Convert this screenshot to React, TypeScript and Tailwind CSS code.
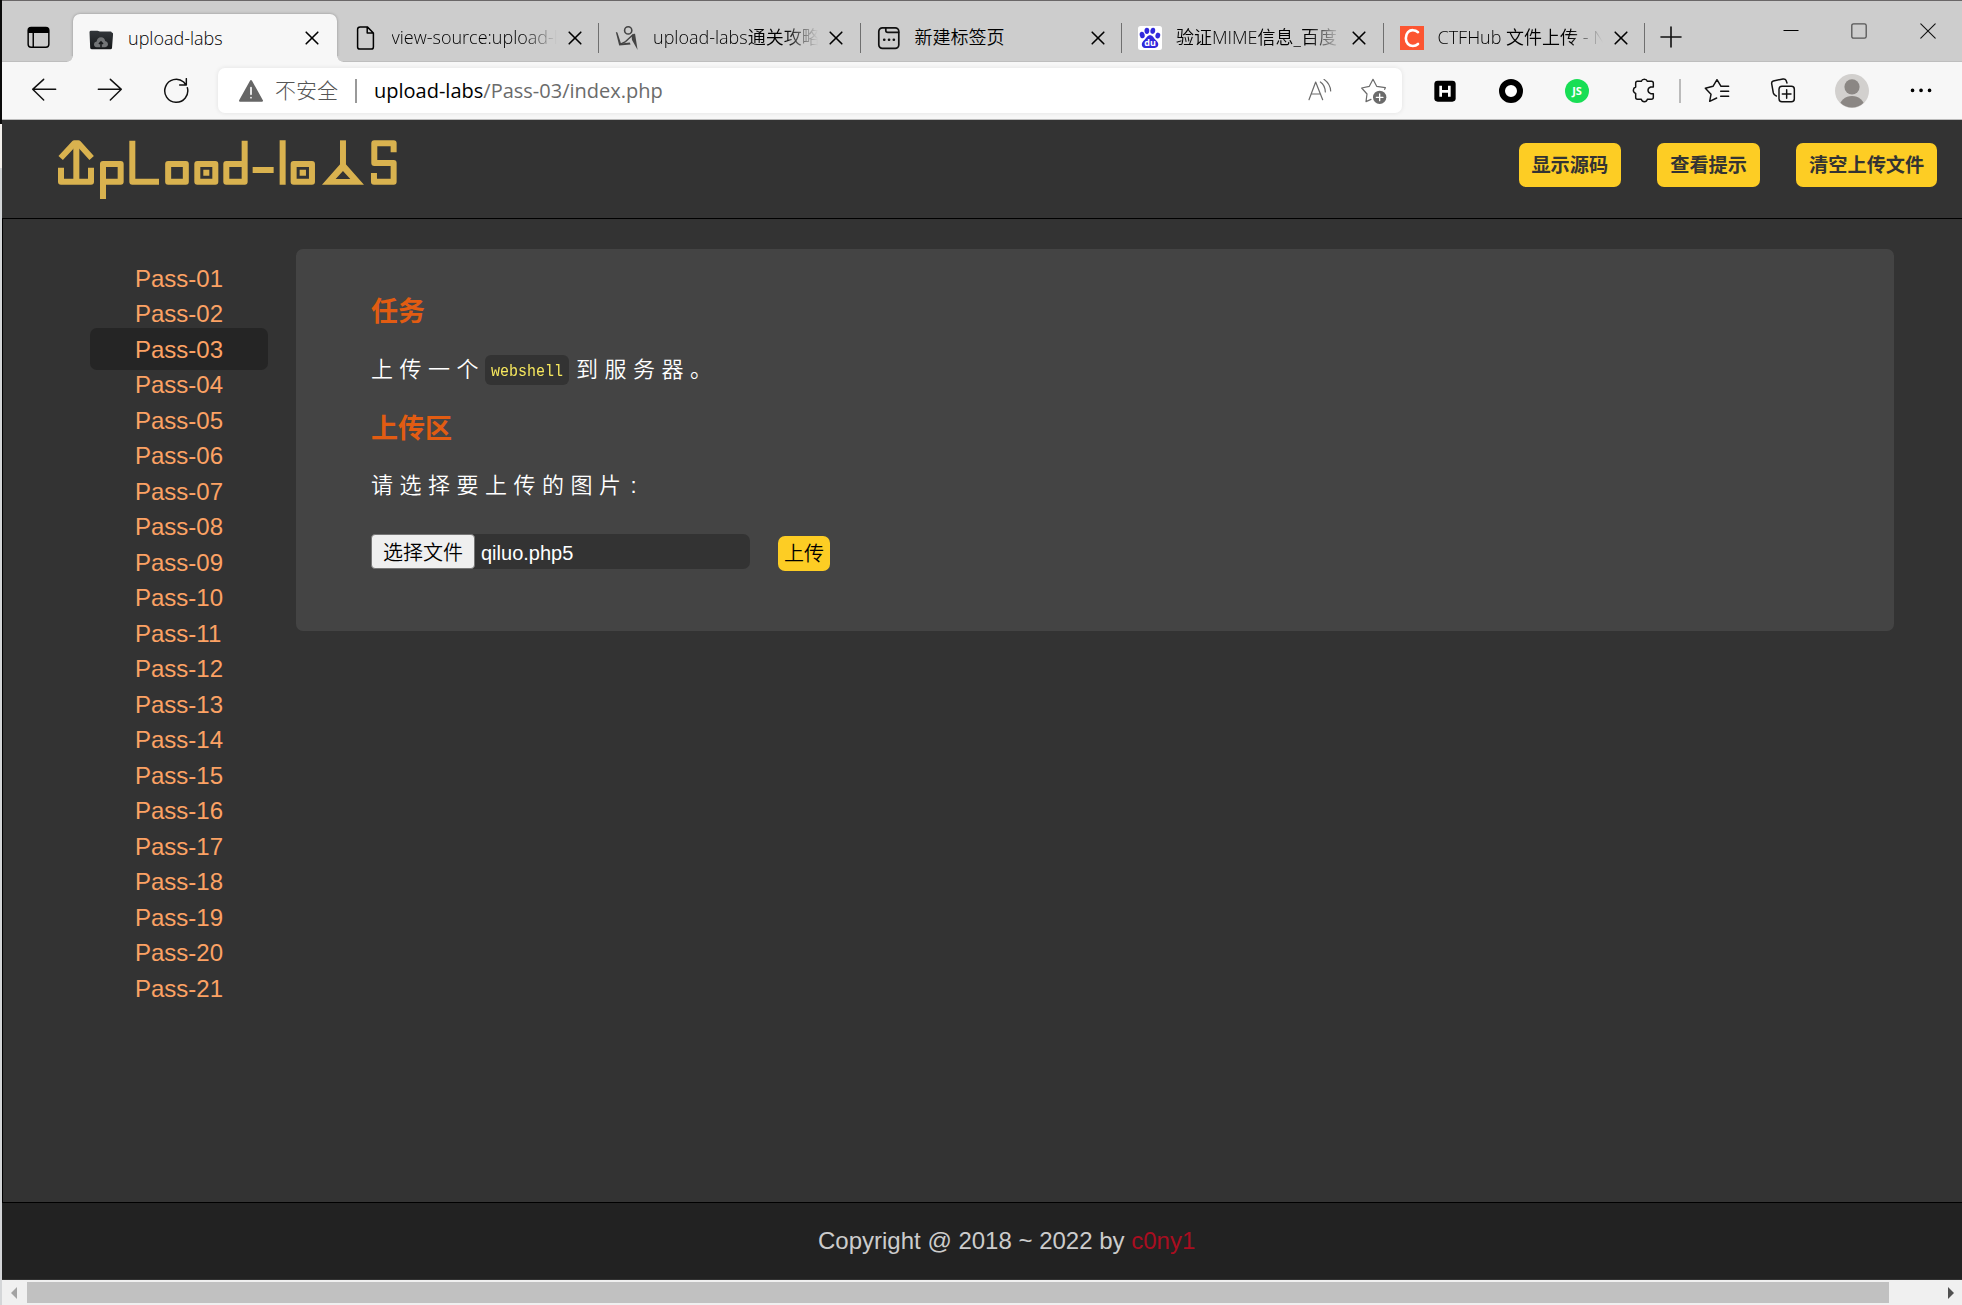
import type { ReactNode } from 'react';

function Drawing({ box, className, children }: { box: string; className: string; children: ReactNode }) {
  return (
    <svg viewBox={box} className={`block shrink-0 ${className}`} fill="none" stroke="#111" strokeWidth="4.4" strokeLinecap="round" strokeLinejoin="round">
      {children}
    </svg>
  );
}

const CloseIcon = () => (
  <Drawing box="0 0 14 14" className="h-3.5 w-3.5"><path d="M1.2 1.2L12.8 12.8M12.8 1.2L1.2 12.8" strokeWidth="1.6" stroke="#000" /></Drawing>
);

const UploadFavicon = () => (
  <Drawing box="0 0 24 20" className="h-5 w-6">
    <defs>
      <linearGradient id="folder" x1="0" y1="0" x2="0" y2="1">
        <stop offset="0" stopColor="#33373b" />
        <stop offset="1" stopColor="#16181a" />
      </linearGradient>
    </defs>
    <path d="M0.5 2.2Q0.5 0.8 2 0.8H8.5L11 1.6H21.6Q22.6 1.6 22.8 2.6L23.8 3Q24.2 3.6 24 5L23 18Q22.8 19.3 21.5 19.3H3Q1.4 19.3 1.2 18Z" fill="url(#folder)" stroke="none" />
    <path d="M7.6 17.2Q4.8 17 5 14Q5.2 11.8 7.6 11.4Q8.2 7.4 12 7.2Q15.6 7.3 16.2 11Q18.8 11.4 19 14.1Q18.9 17.1 16.2 17.2Z" fill="#727476" stroke="none" />
    <path d="M12 17.6V12.6M10 14L12 11.8L14 14" stroke="#17191b" strokeWidth="1.5" strokeLinecap="butt" strokeLinejoin="miter" />
  </Drawing>
);

const PageFavicon = () => (
  <Drawing box="0 0 24 24" className="h-6 w-6">
    <path d="M6.2 0.9H13.3L19.4 7V21Q19.4 23.1 17.3 23.1H6Q3.600 23.1 3.6 21V3.2Q3.6 0.9 6.2 0.9ZM13.2 1V7.1H19.4" strokeWidth="1.5" stroke="#000" />
  </Drawing>
);

const FigureFavicon = () => (
  <Drawing box="0 0 24 24" className="h-6 w-6">
    <circle cx="13.2" cy="4.4" r="3.6" stroke="#444" strokeWidth="1.6" />
    <path d="M0.8 6L2.4 6.6L6 17.4L14.8 16.4L15.6 18.4L4.2 19.6Z" fill="#444" stroke="none" />
    <path d="M5 18.3L10.6 15.6L18.2 8.4" stroke="#444" strokeWidth="1.4" />
    <path d="M16.6 9.6L20 7.6L22.6 24L17 14Z" fill="#444" stroke="none" />
  </Drawing>
);

const NewTabFavicon = () => (
  <Drawing box="0 0 24 24" className="h-6 w-6">
    <rect x="1.8" y="1.8" width="20" height="20.6" rx="3.6" stroke="#111" strokeWidth="1.7" />
    <path d="M8.8 1.8V4.4Q8.8 6.3 10.8 6.3H21.6" strokeWidth="1.7" />
    <path d="M7.2 13.7H7.3M12 13.7H12.1M16.8 13.7H16.9" strokeWidth="2.6" />
  </Drawing>
);

const BaiduFavicon = () => (
  <Drawing box="0 0 24 24" className="h-6 w-6">
    <rect width="24" height="24" rx="2.5" fill="#fff" stroke="none" />
    <g fill="#3129dc" stroke="none">
      <ellipse cx="4.2" cy="9" rx="2.5" ry="3.2" transform="rotate(-12 4.2 9)" />
      <ellipse cx="8.9" cy="4.8" rx="2.4" ry="3.1" />
      <ellipse cx="14.8" cy="4.8" rx="2.4" ry="3.1" transform="rotate(8 14.8 4.8)" />
      <ellipse cx="19.8" cy="9.6" rx="2.4" ry="3" transform="rotate(12 19.8 9.6)" />
      <path d="M12 9.2C14.8 9.2 15.4 11.6 17.2 13.4C19.4 15.4 21 17 20 19.8C18.8 22.6 15.6 22 12 22C8.4 22 5.2 22.8 4 19.8C3.2 17 4.6 15.4 6.8 13.4C8.8 11.6 9.4 9.2 12 9.2Z" />
    </g>
    <text x="12" y="19.8" textAnchor="middle" fill="#fff" stroke="none" className="font-['Open_Sans',sans-serif] text-[9px] font-bold">du</text>
  </Drawing>
);

const CtfFavicon = () => (
  <span className="flex h-6 w-6 items-center justify-center bg-[#fc5531]">
    <svg viewBox="0 0 24 24" className="h-6 w-6" fill="none" stroke="#fff" strokeWidth="2.6" strokeLinecap="round">
      <path d="M18 6.2C15.2 3.6 10.6 3.4 8 6.2C5 9.6 5.2 15 8 18C10.6 20.6 15.2 20.6 18 18" />
    </svg>
  </span>
);

const backgroundTabs = [
  { title: 'view-source:upload-l', icon: <PageFavicon />, faded: true },
  { title: 'upload-labs通关攻略', icon: <FigureFavicon />, faded: true },
  { title: '新建标签页', icon: <NewTabFavicon />, faded: false },
  { title: '验证MIME信息_百度', icon: <BaiduFavicon />, faded: true },
  { title: 'CTFHub 文件上传 - N', icon: <CtfFavicon />, faded: true },
];

function TabStrip() {
  return (
    <div className="flex h-[61px] shrink-0 border-b border-[#bebebe] bg-[#cdcdcd]">
      <div className="flex w-[71px] shrink-0 pt-[25px] pl-[24.5px]">
        <Drawing box="79 79 70 68" className="h-[23px] w-[23px]">
          <rect x="82.5" y="82.5" width="63" height="60" rx="9" stroke="#000" />
          <path d="M82 99V92Q83 82 92 82H136Q146 83 146 92V99Z" fill="#000" stroke="none" />
          <path d="M98 98V142" stroke="#000" />
        </Drawing>
      </div>
      <div className="relative mt-[13px] mr-[0.5px] mb-[-1px] flex w-[264px] shrink-0 items-center rounded-t-[7px] bg-[#f7f7f7] pl-4 shadow-[0_0_3px_rgba(0,0,0,0.3)] [clip-path:inset(-4px_-8px_0_-8px)]">
        <span className="absolute bottom-0 -left-1.5 h-1.5 w-1.5 bg-[radial-gradient(circle_at_0_0,#cdcdcd_5.5px,#f7f7f7_6px)]" />
        <span className="absolute -right-1.5 bottom-0 h-1.5 w-1.5 bg-[radial-gradient(circle_at_100%_0,#cdcdcd_5.5px,#f7f7f7_6px)]" />
        <span className="mt-1"><UploadFavicon /></span>
        <span className="-mt-px ml-[15px] w-[177px] whitespace-nowrap">upload-labs</span>
        <CloseIcon />
      </div>
      {backgroundTabs.map((tab) => (
        <div key={tab.title} className="flex w-[261.5px] shrink-0 items-center pt-[13px]">
          <span className="ml-4">{tab.icon}</span>
          <span className={tab.faded
            ? '-mt-px ml-[14px] w-[165px] whitespace-nowrap [mask-image:linear-gradient(to_right,#000_80%,transparent_100%)]'
            : '-mt-px ml-[14px] w-[165px] whitespace-nowrap'}>{tab.title}</span>
          <span className="ml-[11px] w-[30.5px]"><CloseIcon /></span>
          <span className="h-[30px] w-px bg-[#6f6f6f]" />
        </div>
      ))}
      <div className="flex flex-1 items-start">
        <Drawing box="0 0 22 22" className="mt-[25px] ml-[14.5px] h-[22px] w-[22px]"><path d="M11 1V21M1 11H21" strokeWidth="1.6" /></Drawing>
        <Drawing box="0 0 16 16" className="mt-[22px] ml-[101px] h-4 w-4"><path d="M0.5 7.5H15.5" strokeWidth="1" stroke="#000" strokeLinecap="butt" /></Drawing>
        <Drawing box="0 0 16 16" className="mt-[22px] ml-[52px] h-4 w-4"><rect x="0.8" y="0.8" width="14.4" height="14.4" rx="1.8" strokeWidth="1.3" stroke="#555" /></Drawing>
        <Drawing box="0 0 16 16" className="mt-[22px] ml-[53px] h-4 w-4"><path d="M0.8 0.8L15.2 15.2M15.2 0.8L0.8 15.2" strokeWidth="1.1" /></Drawing>
      </div>
    </div>
  );
}

function Toolbar() {
  return (
    <div className="flex h-[58px] shrink-0 items-center border-b border-[#bcbcbc] bg-[#f7f7f7]">
      <Drawing box="93 231 78 78" className="ml-[29px] h-[26px] w-[26px]"><path d="M167 265H98M131 235L98 265L131 297" /></Drawing>
      <Drawing box="291 231 78 78" className="ml-10 h-[26px] w-[26px]"><path d="M295 265H364M331 235L364 265L331 297" /></Drawing>
      <Drawing box="489 231 78 78" className="ml-10 h-[26px] w-[26px]"><path d="M562 260A34.5 34.5 0 1 1 551 243L558 252M559 233V252H539" /></Drawing>
      <div className="ml-[29px] flex h-[45px] w-[1184px] shrink-0 items-center rounded-[7px] bg-white shadow-[0_0_5px_rgba(0,0,0,0.09)]">
        <Drawing box="714 234 78 72" className="ml-5 h-6 w-[26px]">
          <path d="M753 240L786 299H720Z" fill="#666" stroke="#666" strokeWidth="6" />
          <path d="M753 260V280M753 290V290.5" stroke="#fff" strokeWidth="5" />
        </Drawing>
        <span className="ml-[11px] text-[21px] font-light text-[#555]">不安全</span>
        <span className="ml-[17px] h-6 w-[1.5px] bg-[#999]" />
        <span className="ml-[17.5px] w-[930.5px] text-xl font-[390] whitespace-nowrap text-black">upload-labs<span className="text-[#6b6b6b]">/Pass-03/index.php</span></span>
        <Drawing box="54 204 72 72" className="ml-[3px] h-6 w-6">
          <path d="M57 266L77 213L98 266M64 249H92M91 213Q105 222 106 243M102 205Q121 219 122 240" stroke="#6b6b6b" strokeWidth="3.6" />
        </Drawing>
        <Drawing box="210 201 84 84" className="ml-7 h-7 w-7">
          <path d="M284 238L286 233L260 229L249 208L238 229L215 234L231 252L228 275L243 268" stroke="#6b6b6b" strokeWidth="3.6" />
          <circle cx="269" cy="262" r="20" fill="#6b6b6b" stroke="none" />
          <path d="M269 252V272M259 262H279" stroke="#fff" strokeWidth="4" />
        </Drawing>
      </div>
      <Drawing box="432 208 66 66" className="ml-8 h-[22px] w-[22px]">
        <rect x="433" y="210" width="64" height="63" rx="10" fill="#000" stroke="none" />
        <path d="M452 225V258M478 225V258M452 242H478" stroke="#fff" strokeWidth="8" strokeLinecap="butt" />
      </Drawing>
      <Drawing box="0 0 24 24" className="ml-[43px] h-6 w-6"><circle cx="12" cy="12" r="9" stroke="#000" strokeWidth="6" fill="#fff" /></Drawing>
      <span className="ml-[42px] flex h-6 w-6 shrink-0 items-center justify-center rounded-full bg-[#18de55] text-[11px] font-bold text-white">JS</span>
      <Drawing box="36 204 69 75" className="ml-[43px] h-[25px] w-[23px]">
        <path d="M52 214H64Q66 208 73 208Q80 208 82 214H94Q100 214 100 220V231H92Q84 234 84 241Q84 248 92 251H100V262Q100 268 94 268H82Q80 275 73 275Q66 275 64 268H52Q47 268 47 262V250Q40 248 40 241Q40 234 47 231V220Q47 214 52 214Z" strokeWidth="4.4" />
      </Drawing>
      <span className="ml-6 h-6 w-[1.5px] shrink-0 bg-[#bbb]" />
      <Drawing box="252 204 78 75" className="ml-[23px] h-[25px] w-[26px]">
        <path d="M326 229H303L291 209L279 229L256 235L273 253L269 274L290 264M302 244H326M302 259H326" strokeWidth="4.4" />
      </Drawing>
      <Drawing box="450 204 78 75" className="ml-10 h-[25px] w-[26px]">
        <rect x="477" y="229" width="46" height="46" rx="9" strokeWidth="4.4" />
        <path d="M500 239V265M487 252H513M501 219L498 211Q496 206 489 207L460 213Q454 215 455 221L460 249Q462 256 469 258" strokeWidth="4.4" />
      </Drawing>
      <Drawing box="0 0 34 34" className="ml-[39px] h-[34px] w-[34px]">
        <defs><clipPath id="avatar"><circle cx="17" cy="17" r="16.5" /></clipPath></defs>
        <circle cx="17" cy="17" r="17" fill="#d2d0ce" stroke="none" />
        <circle cx="17" cy="12.8" r="7.6" fill="#8b8784" stroke="none" />
        <ellipse cx="17" cy="33" rx="12.5" ry="11" fill="#8b8784" stroke="none" clipPath="url(#avatar)" />
      </Drawing>
      <Drawing box="0 0 22 22" className="ml-[41px] h-[22px] w-[22px]"><path d="M2.5 10.4H2.6M11 10.4H11.1M19.5 10.4H19.6" strokeWidth="3.6" stroke="#000" /></Drawing>
    </div>
  );
}

function Logo() {
  return (
    <svg viewBox="170 118 1024 186" className="block h-[62px] w-[341.3px]" fill="none" stroke="#d9b24f" strokeWidth="18" strokeLinejoin="round">
      <path d="M228 246V132M182 204V246H272V204" />
      <path d="M181 175L222 131H234L274 175" />
      <path d="M308 298V193H361V246H308" />
      <path d="M396 123V246H476" />
      <rect x="503.5" y="193" width="53" height="53" />
      <rect x="591" y="193" width="54" height="53" />
      <path d="M733 123V246H678V193H733" />
      <path d="M757 211H820M847 122V255" />
      <rect x="880" y="193" width="55" height="53" />
      <path d="M609 219H627M898 219H917" />
      <path d="M1028 122V200" />
      <path d="M1020 193H1036L1091 255H965ZM1028 214L1006 238H1050Z" fill="#d9b24f" fillRule="evenodd" stroke="none" />
      <path d="M1180 158V131H1122V190H1180V246H1121V220" />
    </svg>
  );
}

const passes = Array.from({ length: 21 }, (_, i) => `Pass-${String(i + 1).padStart(2, '0')}`);

function HeaderButton({ label }: { label: string }) {
  return <button className="h-11 rounded-[7px] bg-[#fdcd24] px-[12.8px] pt-0.5 text-[19.2px] font-bold text-[#333]">{label}</button>;
}

function Page() {
  return (
    <div className="flex min-h-0 flex-1 flex-col bg-[#333] font-['Liberation_Sans','Noto_Sans_CJK_SC',sans-serif]">
      <header className="flex h-[98px] shrink-0 justify-between pr-[25px] pl-[54.7px]">
        <div className="pt-[19.3px]"><Logo /></div>
        <div className="flex items-start gap-[36.5px] pt-[23px]">
          <HeaderButton label="显示源码" />
          <HeaderButton label="查看提示" />
          <HeaderButton label="清空上传文件" />
        </div>
      </header>
      <div className="flex flex-1 items-start border-t border-l border-black">
        <nav className="ml-[87px] w-[178px] pt-[41.25px] text-2xl text-[#fca264]">
          {passes.map((pass) => (
            <a key={pass} className={pass === 'Pass-03'
              ? '-my-[3.25px] flex h-[42px] items-center rounded-[7px] bg-[#252525] pt-[1.5px] pl-[45px]'
              : 'flex h-[35.5px] items-center pt-[1.5px] pl-[45px]'}>{pass}</a>
          ))}
        </nav>
        <main className="mt-[30px] ml-7 h-[382px] w-[1598px] rounded-[7px] bg-[#444] pt-[45px] pl-[75px] text-white">
          <h3 className="h-9 text-[27px] leading-9 font-bold text-[#e25c12]">任务</h3>
          <p className="mt-6 flex h-8 items-center text-[22px] tracking-[6.5px] whitespace-nowrap">
            上传一个
            <code className="flex h-[30px] items-center rounded-[6px] bg-[#333] px-[6px] font-['Liberation_Mono',monospace] text-[15px] tracking-normal text-[#f7e85e]">
              <span className="mt-[3px] inline-block scale-y-[1.15]">webshell</span>
            </code>
            <span className="ml-[7px]">到服务器。</span>
          </p>
          <h3 className="mt-[25px] h-9 text-[27px] leading-9 font-bold text-[#e25c12]">上传区</h3>
          <p className="mt-[23px] flex h-8 items-center text-[22px] tracking-[6.5px] whitespace-nowrap">请选择要上传的图片<span className="ml-[3px]">:</span></p>
          <div className="mt-8 flex items-start text-xl">
            <div className="flex h-[35px] w-[379px] items-center rounded-[7px] bg-[#333]">
              <button className="h-[35px] w-[104px] rounded-[4px] border border-[#767676] bg-[#efefef] pt-0.5 font-[350] text-black">选择文件</button>
              <span className="mt-0.5 ml-1.5">qiluo.php5</span>
            </div>
            <button className="mt-0.5 ml-7 h-[35px] w-[52px] rounded-[7px] bg-[#fdcd24] text-black">上传</button>
          </div>
        </main>
      </div>
      <footer className="flex h-[78px] shrink-0 items-center border-t border-b border-t-black border-b-[#333] bg-[#222] pl-[816px] text-2xl whitespace-pre text-[#ccc]">
        Copyright @ 2018 ~ 2022 by <a className="text-[#a90d20]">c0ny1</a>
      </footer>
    </div>
  );
}

function HorizontalScrollbar() {
  return (
    <div className="flex h-[25px] shrink-0 items-center bg-[#f0f0f0]">
      <svg viewBox="0 0 6 12" className="ml-[9px] h-3 w-1.5 shrink-0" fill="#a3a3a3"><path d="M6 0V12L0 6Z" /></svg>
      <span className="ml-2.5 h-[21px] w-[1862px] shrink-0 bg-[#c1c1c1]" />
      <svg viewBox="0 0 6 12" className="ml-[59px] h-3 w-1.5 shrink-0" fill="#505050"><path d="M0 0V12L6 6Z" /></svg>
    </div>
  );
}

export default function App() {
  return (
    <div className="flex h-[1305px] w-[1962px] overflow-hidden bg-[#333]">
      <div className="flex w-0.5 shrink-0 flex-col">
        <span className="h-[124px] bg-[#0b0b0b]" />
        <span className="h-11 bg-[#f3f0ec]" />
        <span className="flex-1 bg-[#d4d6d8]" />
      </div>
      <div className="flex min-w-0 flex-1 flex-col border-t border-[#6a6768] font-['Open_Sans','Noto_Sans_CJK_SC',sans-serif] text-lg font-[350] text-black">
        <TabStrip />
        <Toolbar />
        <Page />
        <HorizontalScrollbar />
      </div>
    </div>
  );
}
